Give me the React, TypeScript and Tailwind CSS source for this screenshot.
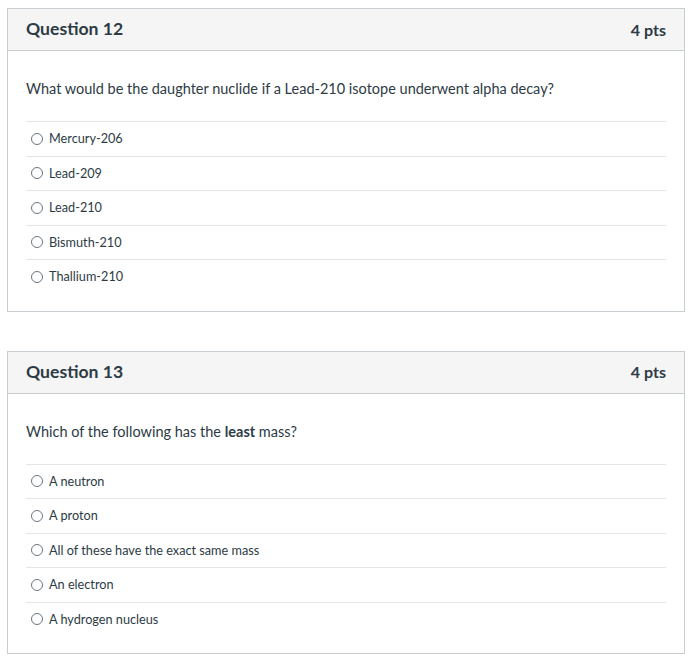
import React from "react";

type Question = {
  title: string;
  points: string;
  prompt: React.ReactNode;
  answers: string[];
};

const questions: Question[] = [
  {
    title: "Question 12",
    points: "4 pts",
    prompt: "What would be the daughter nuclide if a Lead-210 isotope underwent alpha decay?",
    answers: ["Mercury-206", "Lead-209", "Lead-210", "Bismuth-210", "Thallium-210"],
  },
  {
    title: "Question 13",
    points: "4 pts",
    prompt: (
      <>
        Which of the following has the <strong className="font-bold">least</strong> mass?
      </>
    ),
    answers: [
      "A neutron",
      "A proton",
      "All of these have the exact same mass",
      "An electron",
      "A hydrogen nucleus",
    ],
  },
];

function QuestionCard({ q }: { q: Question }) {
  return (
    <div className="w-[678px] border border-[#c7cdd1] bg-white">
      <div className="flex h-[42px] items-center justify-between border-b border-[#c7cdd1] bg-[#f5f5f5] px-[18px]">
        <h2 className="text-[17.6px] font-bold text-[#2d3b45]">{q.title}</h2>
        <span className="text-[16px] font-bold text-[#2d3b45]">{q.points}</span>
      </div>
      <div className="px-[18px] pt-[26px] pb-[17px]">
        <p className="mb-[20px] text-[14.5px] leading-[24px] text-[#2d3b45]">{q.prompt}</p>
        <div>
          {q.answers.map((a) => (
            <label
              key={a}
              className="flex h-[34.5px] items-center border-t border-[#e3e6e8] text-[12.7px] text-[#2d3b45]"
            >
              <span className="ml-[5px] mr-[6px] inline-block h-[12px] w-[12px] rounded-full border border-[#6b7780] bg-white" />
              {a}
            </label>
          ))}
        </div>
      </div>
    </div>
  );
}

export default function App() {
  return (
    <div
      className="min-h-[661px] bg-white pl-[7px] pt-[8px]"
      style={{ fontFamily: "Lato, 'Liberation Sans', sans-serif" }}
    >
      <div className="flex flex-col gap-[39px]">
        {questions.map((q) => (
          <QuestionCard key={q.title} q={q} />
        ))}
      </div>
    </div>
  );
}
